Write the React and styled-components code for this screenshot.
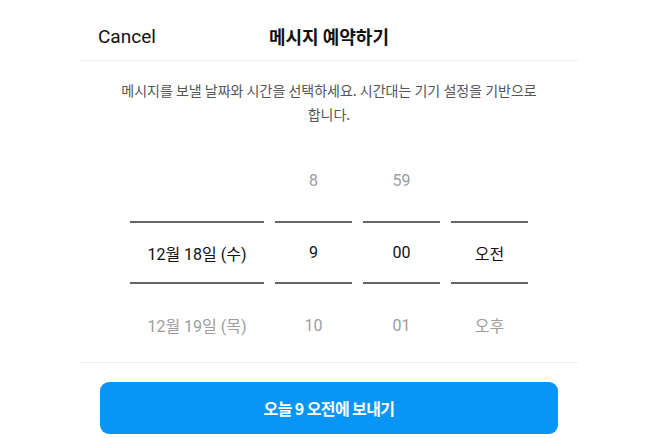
import React from "react";
import styled, { createGlobalStyle } from "styled-components";

const GlobalStyle = createGlobalStyle`
  body {
    margin: 0;
    background: #ffffff;
    font-family: Roboto, "Noto Sans CJK KR", sans-serif;
  }
`;

const columns = [
  { width: 134, top: "", mid: "12월 18일 (수)", bottom: "12월 19일 (목)" },
  { width: 77, top: "8", mid: "9", bottom: "10" },
  { width: 77, top: "59", mid: "00", bottom: "01" },
  { width: 77, top: "", mid: "오전", bottom: "오후" },
];

function App() {
  return (
    <>
      <GlobalStyle />
      <Page>
        <Panel>
          <Header>
            <CancelButton>Cancel</CancelButton>
            <Title>메시지 예약하기</Title>
          </Header>
          <Description>
            메시지를 보낼 날짜와 시간을 선택하세요. 시간대는 기기 설정을 기반으로 합니다.
          </Description>
          <Picker>
            {columns.map((col, i) => (
              <Column key={i} $width={col.width}>
                <Cell $pos="top">{col.top}</Cell>
                <Cell $pos="mid">{col.mid}</Cell>
                <Cell $pos="bottom">{col.bottom}</Cell>
              </Column>
            ))}
          </Picker>
          <Footer>
            <SendButton>오늘 9 오전에 보내기</SendButton>
          </Footer>
        </Panel>
      </Page>
    </>
  );
}

const Page = styled.div`
  width: 658px;
  height: 438px;
  display: flex;
  justify-content: center;
  overflow: hidden;
`;

const Panel = styled.div`
  width: 498px;
  display: flex;
  flex-direction: column;
`;

const Header = styled.div`
  height: 61px;
  border-bottom: 1px solid #efefef;
  position: relative;
  display: flex;
  align-items: center;
  justify-content: center;
  padding-top: 12px;
  box-sizing: border-box;
`;

const CancelButton = styled.div`
  position: absolute;
  left: 18px;
  top: 25px;
  font-size: 19px;
  color: #111111;
  font-family: Roboto, sans-serif;
`;

const Title = styled.div`
  font-size: 18px;
  font-weight: 700;
  color: #111111;
  font-family: "Noto Sans CJK KR", sans-serif;
`;

const Description = styled.p`
  margin: 17px auto 0;
  max-width: 432px;
  text-align: center;
  font-size: 14px;
  line-height: 24px;
  color: #555555;
  word-break: keep-all;
  font-family: "Noto Sans CJK KR", sans-serif;
`;

const Picker = styled.div`
  margin-top: 21px;
  display: flex;
  justify-content: center;
  gap: 11px;
`;

const Column = styled.div`
  width: ${(p) => p.$width}px;
  display: flex;
  flex-direction: column;
`;

const Cell = styled.div`
  box-sizing: border-box;
  display: flex;
  align-items: center;
  justify-content: center;
  font-size: 16px;
  color: ${(p) => (p.$pos === "mid" ? "#111111" : "#9d9d9d")};
  height: ${(p) => (p.$pos === "mid" ? "63px" : "74px")};
  padding: ${(p) =>
    p.$pos === "top" ? "0 0 8px" : p.$pos === "bottom" ? "8px 0 0" : "0"};
  border-top: ${(p) => (p.$pos === "mid" ? "2px solid #666666" : "none")};
  border-bottom: ${(p) => (p.$pos === "mid" ? "2px solid #666666" : "none")};
`;

const Footer = styled.div`
  margin-top: 4px;
  border-top: 1px solid #efefef;
  padding: 19px 20px 0;
`;

const SendButton = styled.button`
  width: 100%;
  height: 52px;
  border: none;
  border-radius: 9px;
  background: #0796f6;
  color: #ffffff;
  font-size: 16px;
  font-weight: 700;
  letter-spacing: -0.6px;
  font-family: "Noto Sans CJK KR", sans-serif;
  cursor: pointer;
`;

export default App;
